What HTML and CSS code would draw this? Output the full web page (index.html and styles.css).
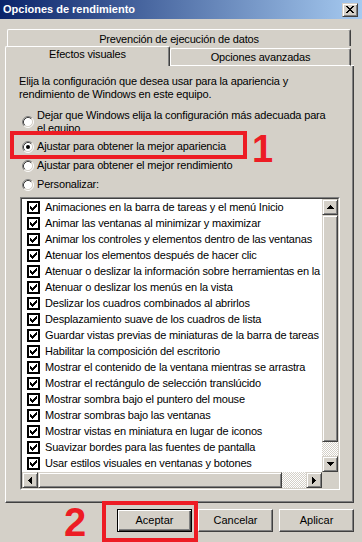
FILE: index.html
```html
<!DOCTYPE html>
<html lang="es">
<head>
    <meta charset="UTF-8">
    <meta name="viewport" content="width=device-width, initial-scale=1.0">
    <title>Opciones de rendimiento</title>
    <link rel="stylesheet" href="styles.css">
</head>
<body>
    <svg class="defs" width="0" height="0">
        <symbol id="check" viewBox="0 0 13 13">
            <rect x="1" y="1" width="11" height="11" fill="#fff" stroke="#000" stroke-width="2"/>
            <path d="M9 3h1v1h-1z M8 4h2v1h-2z M3 5h1v1h-1z M7 5h3v1h-3z M3 6h2v1h-2z M6 6h3v1h-3z M3 7h5v1h-5z M4 8h3v1h-3z M5 9h1v1h-1z" fill="#000"/>
        </symbol>
        <symbol id="radio" viewBox="0 0 12 12">
            <circle cx="6" cy="6" r="4.5" fill="#fff"/>
            <path d="M2.11 9.89A5.5 5.5 0 0 1 9.89 2.11" fill="none" stroke="#808080"/>
            <path d="M9.89 2.11A5.5 5.5 0 0 1 2.11 9.89" fill="none" stroke="#fff"/>
            <path d="M2.82 9.18A4.5 4.5 0 0 1 9.18 2.82" fill="none" stroke="#404040"/>
            <path d="M9.18 2.82A4.5 4.5 0 0 1 2.82 9.18" fill="none" stroke="#d4d0c8"/>
        </symbol>
    </svg>

    <div class="dialog">
        <div class="titlebar">
            <span class="title">Opciones de rendimiento</span>
            <span class="close-btn">
                <svg width="8" height="7" viewBox="0 0 8 7"><path d="M0 0h2v1h-2z M6 0h2v1h-2z M1 1h2v1h-2z M5 1h2v1h-2z M2 2h4v1h-4z M3 3h2v1h-2z M2 4h4v1h-4z M1 5h2v1h-2z M5 5h2v1h-2z M0 6h2v1h-2z M6 6h2v1h-2z" fill="#000"/></svg>
            </span>
        </div>

        <div class="tabs">
            <div class="tab-row">
                <div class="tab back">Prevención de ejecución de datos</div>
            </div>
            <div class="tab-row front">
                <div class="tab selected">Efectos visuales</div>
                <div class="tab other">Opciones avanzadas</div>
                <div class="tab-fill"></div>
            </div>
        </div>

        <div class="panel">
            <p class="intro">Elija la configuración que desea usar para la apariencia y<br>rendimiento de Windows en este equipo.</p>

            <div class="radios">
                <div class="radio first">
                    <svg class="radio-icon" width="12" height="12"><use href="#radio"/></svg>
                    <span>Dejar que Windows elija la configuración más adecuada para<br>el equipo</span>
                </div>
                <div class="radio">
                    <svg class="radio-icon" width="12" height="12"><use href="#radio"/><circle cx="6" cy="6" r="2" fill="#000"/></svg>
                    <span>Ajustar para obtener la mejor apariencia</span>
                </div>
                <div class="radio">
                    <svg class="radio-icon" width="12" height="12"><use href="#radio"/></svg>
                    <span>Ajustar para obtener el mejor rendimiento</span>
                </div>
                <div class="radio">
                    <svg class="radio-icon" width="12" height="12"><use href="#radio"/></svg>
                    <span>Personalizar:</span>
                </div>
            </div>

            <div class="listbox">
                <div class="listbox-inner">
                    <ul class="items">
                        <li><svg width="13" height="13"><use href="#check"/></svg><span>Animaciones en la barra de tareas y el menú Inicio</span></li>
                        <li><svg width="13" height="13"><use href="#check"/></svg><span>Animar las ventanas al minimizar y maximizar</span></li>
                        <li><svg width="13" height="13"><use href="#check"/></svg><span>Animar los controles y elementos dentro de las ventanas</span></li>
                        <li><svg width="13" height="13"><use href="#check"/></svg><span>Atenuar los elementos después de hacer clic</span></li>
                        <li><svg width="13" height="13"><use href="#check"/></svg><span>Atenuar o deslizar la información sobre herramientas en la vista</span></li>
                        <li><svg width="13" height="13"><use href="#check"/></svg><span>Atenuar o deslizar los menús en la vista</span></li>
                        <li><svg width="13" height="13"><use href="#check"/></svg><span>Deslizar los cuadros combinados al abrirlos</span></li>
                        <li><svg width="13" height="13"><use href="#check"/></svg><span>Desplazamiento suave de los cuadros de lista</span></li>
                        <li><svg width="13" height="13"><use href="#check"/></svg><span>Guardar vistas previas de miniaturas de la barra de tareas</span></li>
                        <li><svg width="13" height="13"><use href="#check"/></svg><span>Habilitar la composición del escritorio</span></li>
                        <li><svg width="13" height="13"><use href="#check"/></svg><span>Mostrar el contenido de la ventana mientras se arrastra</span></li>
                        <li><svg width="13" height="13"><use href="#check"/></svg><span>Mostrar el rectángulo de selección translúcido</span></li>
                        <li><svg width="13" height="13"><use href="#check"/></svg><span>Mostrar sombra bajo el puntero del mouse</span></li>
                        <li><svg width="13" height="13"><use href="#check"/></svg><span>Mostrar sombras bajo las ventanas</span></li>
                        <li><svg width="13" height="13"><use href="#check"/></svg><span>Mostrar vistas en miniatura en lugar de iconos</span></li>
                        <li><svg width="13" height="13"><use href="#check"/></svg><span>Suavizar bordes para las fuentes de pantalla</span></li>
                        <li><svg width="13" height="13"><use href="#check"/></svg><span>Usar estilos visuales en ventanas y botones</span></li>
                    </ul>

                    <div class="vscroll">
                        <div class="sb-btn"><svg width="7" height="4"><path d="M3 0h1v1h-1z M2 1h3v1h-3z M1 2h5v1h-5z M0 3h7v1h-7z"/></svg></div>
                        <div class="sb-thumb v"></div>
                        <div class="sb-track"></div>
                        <div class="sb-btn"><svg width="7" height="4"><path d="M0 0h7v1h-7z M1 1h5v1h-5z M2 2h3v1h-3z M3 3h1v1h-1z"/></svg></div>
                    </div>

                    <div class="hscroll">
                        <div class="sb-btn"><svg width="4" height="7"><path d="M3 0h1v7h-1z M2 1h1v5h-1z M1 2h1v3h-1z M0 3h1v1h-1z"/></svg></div>
                        <div class="sb-thumb h"></div>
                        <div class="sb-track"></div>
                        <div class="sb-btn"><svg width="4" height="7"><path d="M0 0h1v7h-1z M1 1h1v5h-1z M2 2h1v3h-1z M3 3h1v1h-1z"/></svg></div>
                    </div>

                    <div class="corner"></div>
                </div>
            </div>
        </div>

        <div class="buttons">
            <button class="btn default">Aceptar</button>
            <button class="btn">Cancelar</button>
            <button class="btn">Aplicar</button>
        </div>

        <!-- tutorial marks drawn over the dialog -->
        <div class="mark-box box-one"></div>
        <div class="mark-num num-one">1</div>
        <div class="mark-box box-two"></div>
        <div class="mark-num num-two">2</div>
    </div>
</body>
</html>
```

FILE: styles.css
```css
body {
    margin: 0;
    background-color: #d4d0c8;
    color: #000;
    font-family: 'Liberation Sans', Arial, sans-serif;
    font-size: 11px;
    letter-spacing: -0.17px;
    line-height: 13px;
    overflow: hidden;
}
.defs {
    position: absolute;
}
.dialog {
    position: relative;
    width: 362px;
    height: 542px;
    overflow: hidden;
}
.titlebar {
    height: 19px;
    display: flex;
    align-items: center;
    padding: 0 4px 0 3px;
    background: linear-gradient(to right, #0a246a, #a6caf0);
}
.title {
    color: #fff;
    font-weight: bold;
    letter-spacing: 0;
}
.close-btn {
    margin-left: auto;
    width: 16px;
    height: 14px;
    box-sizing: border-box;
    display: flex;
    align-items: center;
    justify-content: center;
    background: #d4d0c8;
    border: 1px solid;
    border-color: #d4d0c8 #404040 #404040 #d4d0c8;
    box-shadow: inset 1px 1px #fff, inset -1px -1px #808080;
}

/* tabs */
.tabs {
    padding-top: 10px;
}
.tab-row {
    display: flex;
}
.tab-row.front {
    margin-left: 5px;
    width: 349px;
    align-items: flex-end;
}
.tab {
    box-sizing: border-box;
    text-align: center;
    white-space: nowrap;
    border-top: 1px solid #fff;
    border-left: 1px solid #fff;
    border-right: 1px solid #404040;
    box-shadow: inset -1px 0 #808080;
    border-radius: 2px 2px 0 0;
}
.tab.back {
    margin-left: 7px;
    width: 344px;
    height: 17px;
    padding-top: 3px;
}
.tab.selected {
    width: 165px;
    height: 20px;
    padding-top: 1px;
}
.tab.other {
    width: 181px;
    height: 18px;
    padding-top: 2px;
    border-bottom: 1px solid #fff;
}
.tab-fill {
    flex: 1;
    border-bottom: 1px solid #fff;
}

/* panel */
.panel {
    margin-left: 5px;
    width: 349px;
    box-sizing: border-box;
    padding: 9px 12px 12px 14px;
    border-left: 1px solid #fff;
    border-right: 1px solid #404040;
    border-bottom: 1px solid #404040;
    box-shadow: inset -1px -1px #808080;
}
.intro {
    margin: 0 0 8px -1px;
    white-space: nowrap;
}
.radio {
    display: flex;
    align-items: center;
    gap: 3px;
    padding: 3px 0;
    white-space: nowrap;
}
.radio.first {
    padding: 0 0 2px;
}
.radio-icon {
    margin-left: 2px;
    flex-shrink: 0;
}

/* list with check boxes */
.listbox {
    margin-top: 3px;
    width: 320px;
    height: 293px;
    box-sizing: border-box;
    border: 1px solid;
    border-color: #808080 #fff #fff #808080;
}
.listbox-inner {
    height: 100%;
    box-sizing: border-box;
    border: 1px solid;
    border-color: #404040 #d4d0c8 #d4d0c8 #404040;
    display: grid;
    grid-template-columns: 1fr 16px;
    grid-template-rows: 1fr 16px;
}
.items {
    margin: 0;
    padding: 0;
    list-style: none;
    background: #fff;
    overflow: hidden;
}
.items li {
    height: 16px;
    display: flex;
    align-items: center;
    gap: 5px;
    padding-left: 5px;
    white-space: nowrap;
}
.items svg {
    flex-shrink: 0;
}

/* scroll bars */
.vscroll, .hscroll {
    display: flex;
    background-color: #fff;
    background-image: repeating-conic-gradient(#d4d0c8 0 25%, #fff 0 50%);
    background-size: 2px 2px;
}
.vscroll {
    flex-direction: column;
}
.sb-btn, .sb-thumb {
    box-sizing: border-box;
    background: #d4d0c8;
    border: 1px solid;
    border-color: #d4d0c8 #404040 #404040 #d4d0c8;
    box-shadow: inset 1px 1px #fff, inset -1px -1px #808080;
}
.sb-btn {
    width: 16px;
    height: 16px;
    display: flex;
    align-items: center;
    justify-content: center;
    flex-shrink: 0;
}
.sb-thumb.v {
    height: 227px;
}
.sb-thumb.h {
    width: 244px;
}
.sb-track {
    flex: 1;
}
.corner {
    background: #d4d0c8;
}

/* bottom buttons */
.buttons {
    display: flex;
    justify-content: flex-end;
    gap: 6px;
    padding-right: 8px;
    margin-top: 6px;
}
.btn {
    width: 75px;
    height: 23px;
    padding: 0;
    font: inherit;
    color: #000;
    background: #d4d0c8;
    border: 1px solid;
    border-color: #fff #404040 #404040 #fff;
    box-shadow: inset -1px -1px #808080;
}
.btn.default {
    border-color: #000;
    box-shadow: inset 1px 1px #fff, inset -1px -1px #404040, inset -2px -2px #808080;
}

/* red marks */
.mark-box {
    position: absolute;
    box-sizing: border-box;
    border: 4px solid #ed1c24;
}
.box-one {
    left: 10px;
    top: 131px;
    width: 237px;
    height: 28px;
}
.box-two {
    left: 102px;
    top: 501px;
    width: 96px;
    height: 41px;
}
.mark-num {
    position: absolute;
    color: #ed1c24;
    font-weight: bold;
    letter-spacing: 0;
}
.num-one {
    left: 252px;
    top: 130px;
    font-size: 38px;
    line-height: 38px;
}
.num-two {
    left: 64px;
    top: 502px;
    font-size: 40px;
    line-height: 40px;
}
```
